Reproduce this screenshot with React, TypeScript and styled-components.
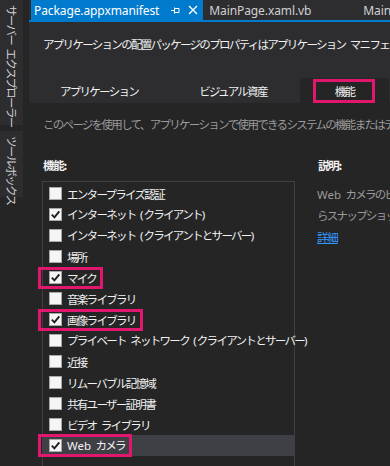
import styled, { createGlobalStyle, css } from "styled-components";

const GlobalStyle = createGlobalStyle`
  html, body {
    margin: 0;
    padding: 0;
    background: #252526;
  }
  * {
    box-sizing: border-box;
  }
`;

const UI = `"Noto Sans", "Noto Sans CJK JP", sans-serif`;

// Meiryo UI is narrower than Noto Sans CJK, so squeeze the CJK text a bit
const jpText = css`
  font-family: "Noto Sans CJK JP", "Noto Sans", sans-serif;
  font-size: 11.5px;
  letter-spacing: -1.7px;
  word-spacing: 3.5px;
`;

const capabilities = [
  { label: "エンタープライズ認証", checked: false },
  { label: "インターネット (クライアント)", checked: true },
  { label: "インターネット (クライアントとサーバー)", checked: false },
  { label: "場所", checked: false },
  { label: "マイク", checked: true, mark: true },
  { label: "音楽ライブラリ", checked: false },
  { label: "画像ライブラリ", checked: true, mark: true },
  { label: "プライベート ネットワーク (クライアントとサーバー)", checked: false },
  { label: "近接", checked: false },
  { label: "リムーバブル記憶域", checked: false },
  { label: "共有ユーザー証明書", checked: false },
  { label: "ビデオ ライブラリ", checked: false },
  { label: "Web カメラ", checked: true, mark: true, selected: true },
];

const pageTabs = [
  { label: "アプリケーション", width: 134 },
  { label: "ビジュアル資産", width: 134 },
  { label: "機能", width: 89, active: true },
];

// latin runs keep normal letter spacing
function Mixed({ text }: { text: string }) {
  return (
    <>
      {text.split(/([A-Za-z()]+)/).map((part, i) =>
        /^[A-Za-z()]+$/.test(part) ? <Latin key={i}>{part}</Latin> : part
      )}
    </>
  );
}

function App() {
  return (
    <>
      <GlobalStyle />
      <Page>
        <Sidebar>
          <SideButton $height={125}>サーバー エクスプローラー</SideButton>
          <SideButton $height={66}>ツールボックス</SideButton>
        </Sidebar>
        <Main>
          <TabBar>
            <DocTab $active>
              <DocTitle>Package.appxmanifest</DocTitle>
              <TabIcon>
                <svg width="9" height="9" viewBox="0 0 9 9">
                  <path d="M0 4.5h3M3.5 1.5v6M3.5 2.5h4.5v4h-4.5" fill="none" stroke="#fff" strokeWidth="1" />
                </svg>
              </TabIcon>
              <TabIcon>
                <svg width="10" height="10" viewBox="0 0 10 10">
                  <path d="M1 1l8 8M9 1l-8 8" stroke="#fff" strokeWidth="1.4" />
                </svg>
              </TabIcon>
            </DocTab>
            <DocTab>
              <DocTitle>MainPage.xaml.vb</DocTitle>
            </DocTab>
            <DocTab>
              <DocTitle>MainPage.xaml</DocTitle>
            </DocTab>
          </TabBar>
          <Designer>
            <Header>アプリケーションの配置パッケージのプロパティはアプリケーション マニフェスト ファイルで設定されています。</Header>
            <PageTabs>
              {pageTabs.map((t) => (
                <PageTab key={t.label} $width={t.width} $active={!!t.active}>
                  {t.label}
                </PageTab>
              ))}
            </PageTabs>
            <Content>
              <Intro>このページを使用して、アプリケーションで使用できるシステムの機能またはデバイスを指定します。</Intro>
              <Columns>
                <LeftColumn>
                  <SectionLabel>機能:</SectionLabel>
                  <List>
                    {capabilities.map((c) => (
                      <Row key={c.label} $selected={!!c.selected}>
                        {c.mark ? (
                          <Mark>
                            <Check checked={c.checked} />
                            <ItemText>
                              <Mixed text={c.label} />
                            </ItemText>
                          </Mark>
                        ) : (
                          <>
                            <Check checked={c.checked} />
                            <ItemText>
                              <Mixed text={c.label} />
                            </ItemText>
                          </>
                        )}
                      </Row>
                    ))}
                  </List>
                </LeftColumn>
                <RightColumn>
                  <SectionLabel>説明:</SectionLabel>
                  <Description>
                    <DescLine>
                      <Latin>Web</Latin> カメラのビデオ フィードへのアクセスを提供します。このフィードか
                    </DescLine>
                    <DescLine>らスナップショットを撮影することもできます。</DescLine>
                  </Description>
                  <MoreLink href="#">詳細</MoreLink>
                </RightColumn>
              </Columns>
            </Content>
          </Designer>
        </Main>
      </Page>
    </>
  );
}

function Check({ checked }: { checked: boolean }) {
  return (
    <Box>
      {checked && (
        <svg width="11" height="11" viewBox="0 0 11 11">
          <path d="M1.8 5.6l2.6 2.7 4.9-6" fill="none" stroke="#1e1e1e" strokeWidth="1.9" />
        </svg>
      )}
    </Box>
  );
}

const Page = styled.div`
  display: flex;
  width: 390px;
  height: 466px;
  overflow: hidden;
  background: #252526;
`;

const Latin = styled.span`
  font-family: "Noto Sans", sans-serif;
  letter-spacing: 0;
`;

const Sidebar = styled.div`
  width: 29px;
  flex-shrink: 0;
  display: flex;
  flex-direction: column;
  gap: 6px;
  padding-right: 6px;
  background: #252526;
`;

const SideButton = styled.div<{ $height: number }>`
  ${jpText};
  height: ${(p) => p.$height}px;
  background: #2d2d30;
  color: #cfcfcf;
  writing-mode: vertical-rl;
  text-orientation: sideways;
  display: flex;
  align-items: center;
  padding-top: 5px;
  white-space: nowrap;
  line-height: 23px;
`;

const Main = styled.div`
  flex: 1;
  min-width: 0;
  display: flex;
  flex-direction: column;
`;

const TabBar = styled.div`
  height: 22px;
  flex-shrink: 0;
  display: flex;
  padding-left: 2px;
  background: #2d2d30;
  border-bottom: 2px solid #007acc;
  overflow: hidden;
`;

const DocTab = styled.div<{ $active?: boolean }>`
  display: flex;
  align-items: center;
  height: 20px;
  padding: ${(p) => (p.$active ? "0 2px 0 3px" : "0 40px 0 6px")};
  background: ${(p) => (p.$active ? "#007acc" : "transparent")};
  color: ${(p) => (p.$active ? "#ffffff" : "#d0d0d0")};
  flex-shrink: 0;
`;

const DocTitle = styled.span`
  font-family: ${UI};
  font-size: 12px;
  letter-spacing: -0.1px;
  white-space: nowrap;
  margin-right: 6px;
`;

const TabIcon = styled.span`
  width: 16px;
  height: 16px;
  display: flex;
  align-items: center;
  justify-content: center;
  margin-left: 2px;
`;

const Designer = styled.div`
  flex: 1;
  min-height: 0;
  display: flex;
  flex-direction: column;
  background: #2d2d30;
`;

const Header = styled.div`
  ${jpText};
  height: 56px;
  flex-shrink: 0;
  padding: 14px 0 0 14px;
  line-height: 16px;
  color: #f1f1f1;
  white-space: nowrap;
  overflow: hidden;
`;

const PageTabs = styled.div`
  height: 25px;
  flex-shrink: 0;
  display: flex;
  padding-left: 3px;
`;

const PageTab = styled.div<{ $width: number; $active: boolean }>`
  ${jpText};
  position: relative;
  width: ${(p) => p.$width}px;
  flex-shrink: 0;
  display: flex;
  align-items: center;
  justify-content: center;
  color: #f1f1f1;
  white-space: nowrap;
  background: ${(p) => (p.$active ? "#252526" : "transparent")};
  ${(p) =>
    p.$active &&
    css`
      &::after {
        content: "";
        position: absolute;
        inset: 1px 14px 0 13px;
        border: 3px solid #e0176c;
      }
    `}
`;

const Mark = styled.span`
  position: relative;
  display: inline-flex;
  align-items: center;
  &::after {
    content: "";
    position: absolute;
    inset: -3px -7px -3px -11px;
    border: 3px solid #e0176c;
    pointer-events: none;
  }
`;

const Content = styled.div`
  flex: 1;
  min-height: 0;
  background: #252526;
  padding: 13px 0 0 13px;
  display: flex;
  flex-direction: column;
`;

const Intro = styled.div`
  ${jpText};
  color: #9a9a9a;
  white-space: nowrap;
  overflow: hidden;
  line-height: 16px;
  margin-left: 1px;
`;

const Columns = styled.div`
  flex: 1;
  display: flex;
  margin-top: 25px;
`;

const LeftColumn = styled.div`
  width: 253px;
  flex-shrink: 0;
  display: flex;
  flex-direction: column;
`;

const SectionLabel = styled.div`
  ${jpText};
  letter-spacing: -1.2px;
  color: #f1f1f1;
  font-weight: bold;
  line-height: 16px;
  margin-bottom: 8px;
  margin-left: 1px;
`;

const List = styled.div`
  flex: 1;
  border: 1px solid #3f3f46;
  border-bottom: none;
  padding-top: 1px;
  display: flex;
  flex-direction: column;
`;

const Row = styled.div<{ $selected: boolean }>`
  height: 21px;
  flex-shrink: 0;
  display: flex;
  align-items: center;
  padding-left: 6px;
  background: ${(p) => (p.$selected ? "#3f3f46" : "transparent")};
  white-space: nowrap;
`;

const Box = styled.span`
  width: 13px;
  height: 13px;
  flex-shrink: 0;
  display: flex;
  align-items: center;
  justify-content: center;
  background: #f5f5f5;
  border: 1px solid #a8a8a8;
  margin-right: 5px;
`;

const ItemText = styled.span`
  ${jpText};
  color: #f1f1f1;
  line-height: 16px;
`;

const RightColumn = styled.div`
  flex: 1;
  min-width: 0;
  padding-left: 22px;
  display: flex;
  flex-direction: column;
`;

const Description = styled.div`
  margin-top: 3px;
`;

const DescLine = styled.div`
  ${jpText};
  color: #9a9a9a;
  line-height: 20px;
  white-space: nowrap;
`;

const MoreLink = styled.a`
  ${jpText};
  letter-spacing: -1.2px;
  align-self: flex-start;
  color: #3399ff;
  line-height: 20px;
  margin-top: 2px;
`;

export default App;
